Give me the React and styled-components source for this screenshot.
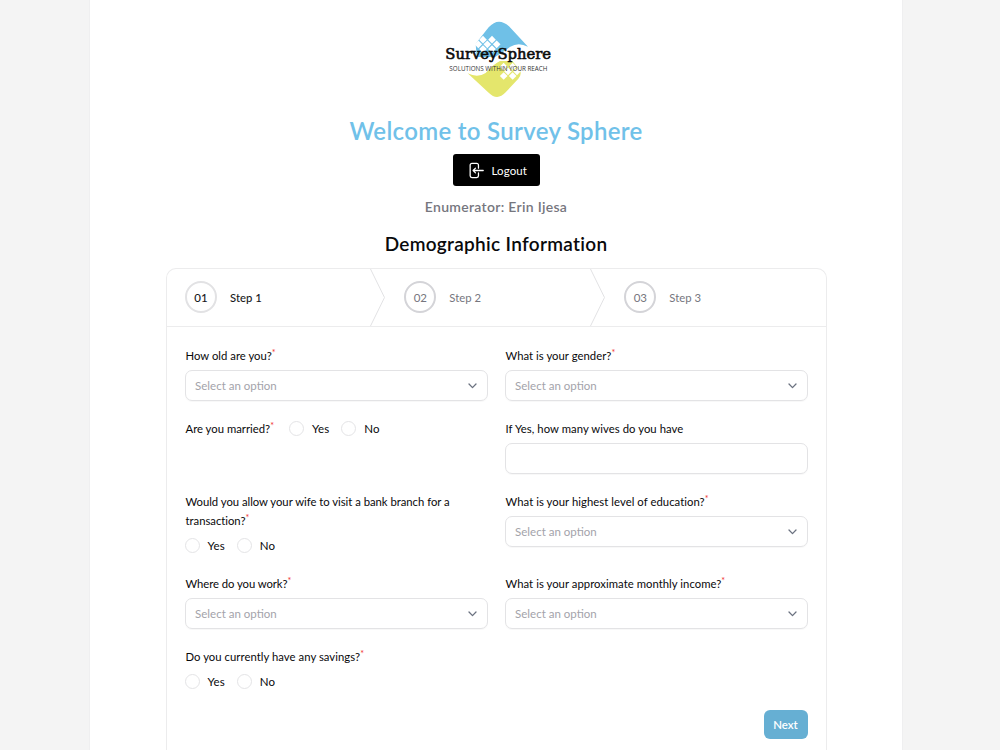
import styled, { createGlobalStyle } from 'styled-components';

const GlobalStyle = createGlobalStyle`
    * {
        box-sizing: border-box;
    }

    body {
        margin: 0;
        background: #F4F4F4;
        font-family: Lato, sans-serif;
        overflow: hidden;
    }
`;

const Page = styled.main`
    display: flex;
    flex-direction: column;
    align-items: center;
    width: 814px;
    height: 750px;
    margin-left: 89px;
    padding-top: 15px;
    overflow: hidden;

    background: #FFFFFF;
    border: 1px solid #EFEFF0;
    border-width: 0 1px;
`;

const LogoArt = styled.svg`
    display: block;
    flex-shrink: 0;
    width: 125px;
    height: 90px;
    margin-left: 3px;
`;

const Welcome = styled.h1`
    margin: 10px 0 0;

    font-weight: 600;
    font-size: 24px;
    line-height: 32px;
    letter-spacing: 0.31px;

    color: #70C1E9;
`;

const LogoutButton = styled.button`
    display: flex;
    flex-shrink: 0;
    align-items: center;
    gap: 7px;
    width: 87px;
    height: 32px;
    margin-top: 7px;
    padding: 0 0 0 13px;

    font-family: inherit;
    font-size: 11.5px;
    letter-spacing: 0.1px;

    color: #FFFFFF;
    background: #000000;
    border: 0;
    border-radius: 3px;
`;

const Enumerator = styled.p`
    margin: 9px 0 0;

    font-weight: 600;
    font-size: 14px;
    line-height: 24px;
    letter-spacing: 0.3px;

    color: #76767E;
`;

const Heading = styled.h2`
    margin: 11px 0 0;

    font-weight: 600;
    font-size: 19px;
    line-height: 28px;
    letter-spacing: 0.3px;

    color: #09090B;
`;

const Wizard = styled.section`
    width: 661px;
    flex: 1 0 500px;
    margin-top: 10px;

    border: 1px solid #ECECED;
    border-bottom: 0;
    border-radius: 10px 10px 0 0;
`;

const Steps = styled.ol`
    display: grid;
    grid-template-columns: 219px 220px 1fr;
    height: 58px;
    margin: 0;
    padding: 0;

    list-style: none;
    border-bottom: 1px solid #ECECED;
`;

const StepItem = styled.li`
    display: flex;
    align-items: center;
    gap: 13px;
    padding: 0 0 1px ${({ $active }) => ($active ? 18.5 : 18.8)}px;

    font-weight: ${({ $active }) => ($active ? 500 : 400)};
    font-size: 11.3px;

    color: ${({ $active }) => ($active ? '#18181B' : '#76767E')};
`;

const StepNumber = styled.span`
    display: flex;
    align-items: center;
    justify-content: center;
    width: 32px;
    height: 32px;

    font-size: 11.5px;

    border: 2px solid ${({ $active }) => ($active ? '#E2E2E4' : '#D4D4D8')};
    border-radius: 50%;
`;

const Separator = styled.svg`
    width: 16px;
    height: 57px;
    margin: 0 0 -1px auto;
`;

const Form = styled.form`
    padding: 19px 18px 0;
`;

const Fields = styled.div`
    display: grid;
    grid-template-columns: 303px 303px;
    gap: 18px 17px;
`;

const Field = styled.div`
    display: flex;
    flex-direction: ${({ $inline }) => ($inline ? 'row' : 'column')};
    gap: ${({ $inline }) => ($inline ? 15 : 5)}px;
`;

const Label = styled.label`
    padding-left: 1px;

    font-size: 11.3px;
    line-height: 19px;
    letter-spacing: ${({ $spacing }) => $spacing || 0}px;

    color: #09090B;
`;

const Required = styled.sup`
    font-size: 9px;
    line-height: 0;
    vertical-align: 4px;

    color: #F0322F;
`;

const Control = styled.div`
    display: flex;
    align-items: center;
    justify-content: space-between;
    height: 31px;
    padding: 0 10px 0 9.6px;

    font-size: 11.5px;

    color: #A3A3AA;
    border: 1px solid #E3E3E5;
    border-radius: 7px;
    box-shadow: 0 1px 1px rgba(0, 0, 0, 0.03);
`;

const Choices = styled.div`
    display: flex;
    gap: 12px;
    height: ${({ $inline }) => ($inline ? 19 : 21)}px;
`;

const Choice = styled.label`
    display: flex;
    align-items: center;
    gap: 8px;

    font-size: 11.5px;
    letter-spacing: 0.1px;

    color: #09090B;
`;

const Radio = styled.span`
    width: 15px;
    height: 15px;

    border: 1px solid #E4E4E6;
    border-radius: 50%;
`;

const Actions = styled.div`
    display: flex;
    justify-content: flex-end;
    margin-top: 18px;
`;

const NextButton = styled.button`
    width: 44px;
    height: 29px;
    padding: 0;

    font-family: inherit;
    font-weight: 600;
    font-size: 11.4px;

    color: #FFFFFF;
    background: #66AFD3;
    border: 0;
    border-radius: 6px;
`;

const Tiles = ({ points }) => points.map(([x, y]) => (
    <path key={`${x}-${y}`} d={`M${x} ${y - 11.5}l11.5 11.5-11.5 11.5-11.5-11.5z`} fill="#FFFFFF" />
));

const Logo = () => (
    <LogoArt viewBox="0 0 375 270">
        <path d="M122 86L161 37Q190 5 222 34L279 95Q250 80 226 95Q205 110 180 126L125 126Z" fill="#6FC0E7" />
        <path d="M98 175Q128 190 152 174Q172 150 195 138L232 138L255 166Q261 178 250 191L212 232Q187 259 161 233Z" fill="#E4E66C" />
        <Tiles points={[[144, 74], [171, 74], [130, 88], [157, 88], [185, 88], [144, 102], [171, 102]]} />
        <Tiles points={[[206, 155], [233, 155], [219, 169], [246, 169], [206, 183], [233, 183]]} />
        <text x="31" y="131" textLength="317" lengthAdjust="spacingAndGlyphs" fontFamily="DejaVu Serif, serif" fontSize="44" fill="#0B0B0B" stroke="#0B0B0B" strokeWidth="1.8">SurveySphere</text>
        <text x="43" y="168" textLength="294" lengthAdjust="spacingAndGlyphs" fontFamily="Open Sans, sans-serif" fontSize="19" fill="#333333">SOLUTIONS WITHIN YOUR REACH</text>
    </LogoArt>
);

const LogoutIcon = () => (
    <svg width="19" height="19" viewBox="0 0 24 24" fill="none" stroke="currentColor" strokeWidth="1.6" strokeLinecap="round" strokeLinejoin="round">
        <path d="M15.75 9V5.25A2.25 2.25 0 0 0 13.5 3h-6a2.25 2.25 0 0 0-2.25 2.25v13.5A2.25 2.25 0 0 0 7.5 21h6a2.25 2.25 0 0 0 2.25-2.25V15M12 9l-3 3m0 0 3 3m-3-3h12.75" />
    </svg>
);

const Chevron = () => (
    <svg width="9" height="6" viewBox="0 0 9 6" fill="none" stroke="#6B7280" strokeWidth="1.3" strokeLinecap="round" strokeLinejoin="round">
        <path d="M1 1l3.5 3.6L8 1" />
    </svg>
);

const Step = ({ number, active, last }) => (
    <StepItem $active={active}>
        <StepNumber $active={active}>0{number}</StepNumber>
        Step {number}
        {!last && (
            <Separator viewBox="0 0 16 57" fill="none" stroke="#E2E2E4">
                <path d="M0.5 0L14.5 28.5L0.5 57" />
            </Separator>
        )}
    </StepItem>
);

const Question = ({ text, type, optional, spacing }) => {
    const inline = type === 'inline-radio';
    return (
        <Field $inline={inline}>
            <Label $spacing={spacing}>
                {text}
                {!optional && <Required>*</Required>}
            </Label>
            {type === 'select' && <Control>Select an option<Chevron /></Control>}
            {type === 'input' && <Control />}
            {(type === 'radio' || inline) && (
                <Choices $inline={inline}>
                    <Choice><Radio />Yes</Choice>
                    <Choice><Radio />No</Choice>
                </Choices>
            )}
        </Field>
    );
};

const questions = [
    { text: 'How old are you?', type: 'select', spacing: 0.02 },
    { text: 'What is your gender?', type: 'select', spacing: 0.03 },
    { text: 'Are you married?', type: 'inline-radio', spacing: 0.01 },
    { text: 'If Yes, how many wives do you have', type: 'input', optional: true, spacing: 0.06 },
    { text: 'Would you allow your wife to visit a bank branch for a transaction?', type: 'radio', spacing: -0.02 },
    { text: 'What is your highest level of education?', type: 'select', spacing: 0.05 },
    { text: 'Where do you work?', type: 'select', spacing: -0.06 },
    { text: 'What is your approximate monthly income?', type: 'select', spacing: 0.04 },
    { text: 'Do you currently have any savings?', type: 'radio', spacing: 0.04 },
];

export default () => (
    <>
        <GlobalStyle />
        <Page>
            <Logo />
            <Welcome>Welcome to Survey Sphere</Welcome>
            <LogoutButton><LogoutIcon />Logout</LogoutButton>
            <Enumerator>Enumerator: Erin Ijesa</Enumerator>
            <Heading>Demographic Information</Heading>
            <Wizard>
                <Steps>
                    <Step number={1} active />
                    <Step number={2} />
                    <Step number={3} last />
                </Steps>
                <Form>
                    <Fields>
                        {questions.map((q) => <Question key={q.text} {...q} />)}
                    </Fields>
                    <Actions>
                        <NextButton type="button">Next</NextButton>
                    </Actions>
                </Form>
            </Wizard>
        </Page>
    </>
);
